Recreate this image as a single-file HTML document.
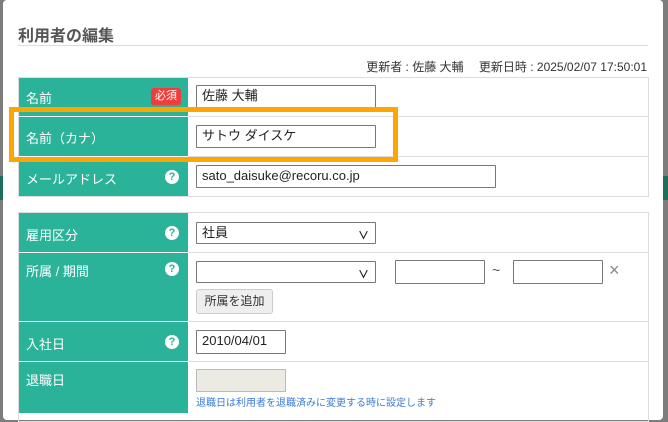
<!DOCTYPE html>
<html><head><meta charset="utf-8"><style>
*{box-sizing:border-box;margin:0;padding:0}
body{width:668px;height:411px;overflow:hidden;background:#7d7d7d;font-family:"Liberation Sans","Noto Sans CJK JP",sans-serif;position:relative}
.a{position:absolute}
.modal{left:3px;top:0;width:660px;height:420px;background:#fff;border-radius:4px}
.g{background:#2bb39a}
.lbl{color:#fff;font-size:13px}
.line{background:#ddd}
.in{border:1px solid #777;background:#fff;font-size:13px;color:#222;padding-left:5px;line-height:20px;border-radius:1px}
.q{width:14px;height:14px;border-radius:50%;background:#fff;color:#2bb39a;font-size:11px;font-weight:bold;text-align:center;line-height:14px}
.chev{right:6px;top:3px;font-size:11px;color:#222;font-weight:bold}
</style></head><body>
<div class="a" style="left:0;top:176px;width:3px;height:24px;background:#1d6e5e"></div>
<div class="a" style="left:663px;top:176px;width:5px;height:24px;background:#1d6e5e"></div>
<div class="a modal"></div>
<div class="a" style="left:18px;top:22px;font-size:16px;font-weight:bold;color:#555">利用者の編集</div>
<div class="a" style="left:18px;top:45px;width:630px;height:1px;background:#ddd"></div>
<div class="a" style="left:300px;top:58px;width:347px;text-align:right;font-size:12px;color:#333">更新者 : 佐藤 大輔　 更新日時 : 2025/02/07 17:50:01</div>

<!-- table 1 -->
<div class="a" style="left:18px;top:77px;width:631px;height:120px;border:1px solid #ddd"></div>
<div class="a g" style="left:19px;top:78px;width:169px;height:118px"></div>
<div class="a line" style="left:19px;top:116px;width:629px;height:1px"></div>
<div class="a line" style="left:19px;top:156px;width:629px;height:1px"></div>
<div class="a" style="left:19px;top:116px;width:169px;height:1px;background:#fff"></div>
<div class="a" style="left:19px;top:156px;width:169px;height:1px;background:#fff"></div>
<div class="a lbl" style="left:26px;top:88px">名前</div>
<div class="a" style="left:151px;top:88px;width:30px;height:17px;background:#f23c3c;border-radius:3px;color:#fff;font-size:11px;text-align:center;line-height:17px">必須</div>
<div class="a in" style="left:196px;top:85px;width:180px;height:23px">佐藤 大輔</div>
<div class="a lbl" style="left:26px;top:128px">名前（カナ）</div>
<div class="a in" style="left:196px;top:125px;width:180px;height:23px">サトウ ダイスケ</div>
<div class="a lbl" style="left:26px;top:169px">メールアドレス</div>
<div class="a q" style="left:165px;top:170px">?</div>
<div class="a in" style="left:196px;top:165px;width:300px;height:23px">sato_daisuke@recoru.co.jp</div>
<div class="a" style="left:9px;top:107px;width:389px;height:55px;border:5px solid #ffa500"></div>

<!-- table 2 -->
<div class="a" style="left:18px;top:212px;width:631px;height:210px;border:1px solid #ddd"></div>
<div class="a g" style="left:19px;top:213px;width:169px;height:200px"></div>
<div class="a line" style="left:19px;top:252px;width:629px;height:1px"></div>
<div class="a line" style="left:19px;top:321px;width:629px;height:1px"></div>
<div class="a line" style="left:19px;top:361px;width:629px;height:1px"></div>
<div class="a" style="left:19px;top:252px;width:169px;height:1px;background:#fff"></div>
<div class="a" style="left:19px;top:321px;width:169px;height:1px;background:#fff"></div>
<div class="a" style="left:19px;top:361px;width:169px;height:1px;background:#fff"></div>

<div class="a lbl" style="left:26px;top:225px">雇用区分</div>
<div class="a q" style="left:165px;top:226px">?</div>
<div class="a in" style="left:196px;top:222px;width:180px;height:22px">社員<span class="a chev">&#x2228;</span></div>

<div class="a lbl" style="left:26px;top:261px">所属 / 期間</div>
<div class="a q" style="left:165px;top:262px">?</div>
<div class="a in" style="left:196px;top:261px;width:180px;height:22px"><span class="a chev">&#x2228;</span></div>
<div class="a in" style="left:395px;top:260px;width:90px;height:24px"></div>
<div class="a" style="left:492px;top:262px;font-size:14px;color:#555">~</div>
<div class="a in" style="left:513px;top:260px;width:90px;height:24px"></div>
<div class="a" style="left:609px;top:260px;font-size:18px;color:#888">×</div>
<div class="a" style="left:196px;top:289px;width:77px;height:25px;border:1px solid #ccc;border-radius:3px;background:#eee;font-size:12px;color:#333;text-align:center;line-height:23px">所属を追加</div>

<div class="a lbl" style="left:26px;top:334px">入社日</div>
<div class="a q" style="left:165px;top:335px">?</div>
<div class="a in" style="left:196px;top:330px;width:90px;height:24px">2010/04/01</div>

<div class="a lbl" style="left:26px;top:370px">退職日</div>
<div class="a" style="left:196px;top:369px;width:90px;height:23px;border:1px solid #bbb;background:#ebebe4"></div>
<div class="a" style="left:196px;top:394px;font-size:10px;color:#3a7bd5">退職日は利用者を退職済みに変更する時に設定します</div>
</body></html>
